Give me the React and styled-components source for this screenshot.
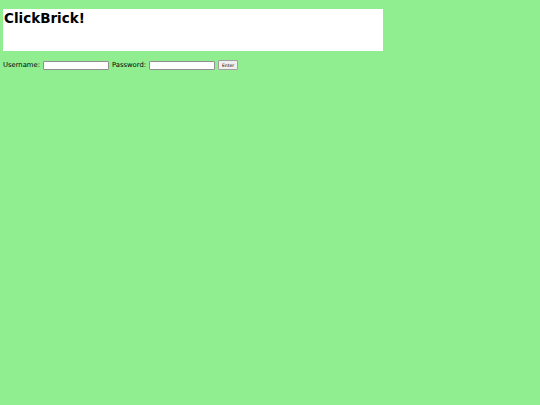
import React from "react";
import styled, { createGlobalStyle } from "styled-components";

const Global = createGlobalStyle`
  html, body { margin: 0; padding: 0; background: #90ee90; }
  body { font-family: "DejaVu Sans", sans-serif; }
`;

const Page = styled.div`
  min-height: 405px;
  padding: 9px 0 0 3px;
  box-sizing: border-box;
`;

const Header = styled.header`
  width: 380px;
  height: 42px;
  background: #ffffff;
  box-sizing: border-box;
  padding: 1px 0 0 1px;
`;

const Title = styled.h1`
  margin: 0;
  font-size: 13.5px;
  line-height: 16px;
  font-weight: bold;
  color: #000;
`;

const LoginForm = styled.form`
  display: flex;
  align-items: center;
  margin-top: 9px;
  font-size: 6.8px;
  color: #000;
`;

const Label = styled.label`
  margin-right: ${(p) => p.$gap}px;
`;

const Field = styled.input`
  width: 66px;
  height: 9px;
  box-sizing: border-box;
  border: 1px solid #8f8f8f;
  border-radius: 1px;
  background: #fff;
  padding: 0;
  margin-right: ${(p) => p.$gap}px;
`;

const Button = styled.button`
  height: 10px;
  width: 20px;
  padding: 0;
  font-family: "DejaVu Sans", sans-serif;
  font-size: 4.5px;
  background: #efefef;
  border: 1px solid #a0a0a0;
  border-radius: 1px;
  color: #000;
`;

export default function App() {
  return (
    <>
      <Global />
      <Page>
        <Header>
          <Title>ClickBrick!</Title>
        </Header>
        <LoginForm onSubmit={(e) => e.preventDefault()}>
          <Label $gap={3}>Username:</Label>
          <Field type="text" $gap={3} />
          <Label $gap={3}>Password:</Label>
          <Field type="password" $gap={3} />
          <Button type="submit">Enter</Button>
        </LoginForm>
      </Page>
    </>
  );
}
